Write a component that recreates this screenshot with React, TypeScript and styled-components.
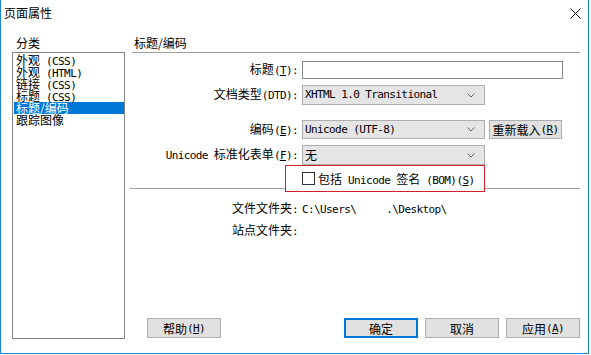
import { FC, ReactNode } from 'react';
import styled, { createGlobalStyle } from 'styled-components';

const GlobalStyle = createGlobalStyle`
  html, body {
    margin: 0;
    padding: 0;
    background: #fff;
  }

  body {
    font-family: 'Noto Sans CJK SC', 'Liberation Sans', sans-serif;
    font-size: 12px;
    color: #000;
  }

  * {
    box-sizing: border-box;
  }
`;

const Window = styled.div`
  display: flex;
  flex-direction: column;
  width: 589px;
  height: 354px;
  border: 1px solid #1883d7;
  border-top: none;
  background: #fff;
`;

const TitleBar = styled.div`
  display: flex;
  align-items: flex-start;
  height: 30px;
  padding: 6px 7px 0 3px;
  line-height: 14px;
`;

const CloseIcon = styled.svg`
  margin-left: auto;
  margin-top: 2px;
`;

const Body = styled.div`
  display: flex;
  flex: 1;
  gap: 5px;
  padding: 0 8px 14px 11px;
`;

const Side = styled.div`
  display: flex;
  flex-direction: column;
  width: 113px;
`;

const SideLabel = styled.div`
  margin-top: 6px;
  padding-left: 4px;
  line-height: 14px;
`;

const CategoryList = styled.ul`
  flex: 1;
  margin: 2px 0 0;
  padding: 1px 0 0 1px;
  list-style: none;
  border: 1px solid #828282;
`;

const CategoryItem = styled.li<{ $active?: boolean }>`
  height: 12px;
  padding-left: 2px;
  line-height: 12px;
  white-space: nowrap;
  background: ${({ $active }) => ($active ? '#0078d7' : 'transparent')};
  color: ${({ $active }) => ($active ? '#fff' : '#000')};
`;

const Main = styled.div`
  display: flex;
  flex-direction: column;
  width: 450px;
`;

const SectionTitle = styled.div`
  margin: 6px 0 0 2px;
  padding: 0 0 2px 2px;
  line-height: 14px;
  border-bottom: 1px solid #a0a0a0;
`;

const Row = styled.div<{ $mt?: number; $h?: number }>`
  display: flex;
  align-items: center;
  margin-top: ${({ $mt }) => $mt ?? 0}px;
  height: ${({ $h }) => $h ?? 14}px;
  line-height: 14px;
`;

const Label = styled.div`
  width: 168px;
  margin-right: 4px;
  text-align: right;
  white-space: nowrap;
`;

const TextInput = styled.div`
  width: 261px;
  height: 100%;
  border: 1px solid #8a8a8a;
  background: #fff;
`;

const Select = styled.div`
  display: flex;
  align-items: center;
  width: 183px;
  height: 100%;
  padding: 0 9px 0 2px;
  border: 1px solid #adadad;
  background: #e5e5e5;
  white-space: nowrap;

  svg {
    margin-left: auto;
  }
`;

const Button = styled.div<{ $w?: number; $default?: boolean }>`
  display: flex;
  align-items: center;
  justify-content: center;
  width: ${({ $w }) => $w ?? 74}px;
  height: 100%;
  border: ${({ $default }) => ($default ? '2px solid #0078d7' : '1px solid #adadad')};
  background: #e1e1e1;
  white-space: nowrap;
`;

const ReloadButton = styled(Button)`
  margin-left: 4px;
`;

const CheckRow = styled.div`
  position: relative;
  z-index: 1;
  display: flex;
  align-items: center;
  gap: 3px;
  width: 200px;
  height: 27px;
  margin-left: 155px;
  padding-left: 16px;
  border: 1px solid #d0202a;
  background: #fff;
  white-space: nowrap;
`;

const CheckBox = styled.span`
  display: inline-block;
  width: 13px;
  height: 13px;
  border: 1px solid #333;
  background: #fff;
`;

const Separator = styled.div`
  height: 1px;
  margin-top: -4px;
  background: #a0a0a0;
`;

const Value = styled.div`
  white-space: pre;
`;

const ButtonBar = styled.div`
  display: flex;
  gap: 7px;
  height: 20px;
  margin-top: auto;
  margin-bottom: 1px;
  padding-left: 17px;
`;

const Spacer = styled.div`
  flex: 1;
`;

const L = styled.span`
  font-family: 'DejaVu Sans Mono', 'Liberation Mono', monospace;
  font-size: 11px;
  letter-spacing: -0.6px;
`;

const Chevron: FC = () => (
  <svg width='8' height='5' viewBox='0 0 8 5'>
    <path d='M0.5 0.5 L4 4 L7.5 0.5' fill='none' stroke='#606060' strokeWidth='1' />
  </svg>
);

const Key: FC<{ children: ReactNode }> = ({ children }) => (
  <L>
    (<u>{children}</u>)
  </L>
);

const categories = ['外观 (CSS)', '外观 (HTML)', '链接 (CSS)', '标题 (CSS)', '标题/编码', '跟踪图像'];

const CategoryText: FC<{ text: string }> = ({ text }) => {
  const parts = text.split(' ');
  if (parts.length === 1) return <>{text}</>;
  return (
    <>
      {parts[0]}
      <L> {parts[1]}</L>
    </>
  );
};

const App: FC = () => {
  return (
    <>
      <GlobalStyle />
      <Window>
        <TitleBar>
          页面属性
          <CloseIcon width='11' height='11' viewBox='0 0 11 11'>
            <path d='M0.5 0.5 L10.5 10.5 M10.5 0.5 L0.5 10.5' stroke='#111' strokeWidth='1' />
          </CloseIcon>
        </TitleBar>
        <Body>
          <Side>
            <SideLabel>分类</SideLabel>
            <CategoryList>
              {categories.map((c, i) => (
                <CategoryItem key={c} $active={i === 4}>
                  <CategoryText text={c} />
                </CategoryItem>
              ))}
            </CategoryList>
          </Side>
          <Main>
            <SectionTitle>标题/编码</SectionTitle>
            <Row $mt={8} $h={18}>
              <Label>
                标题<Key>T</Key>
                <L>:</L>
              </Label>
              <TextInput />
            </Row>
            <Row $mt={6} $h={20}>
              <Label>
                文档类型<L>(DTD):</L>
              </Label>
              <Select>
                <L>XHTML 1.0 Transitional</L>
                <Chevron />
              </Select>
            </Row>
            <Row $mt={15} $h={19}>
              <Label>
                编码<Key>E</Key>
                <L>:</L>
              </Label>
              <Select>
                <L>Unicode (UTF-8)</L>
                <Chevron />
              </Select>
              <ReloadButton $w={73}>
                重新载入<Key>R</Key>
              </ReloadButton>
            </Row>
            <Row $mt={6} $h={20}>
              <Label>
                <L>Unicode </L>标准化表单<Key>F</Key>
                <L>:</L>
              </Label>
              <Select>
                无
                <Chevron />
              </Select>
            </Row>
            <CheckRow>
              <CheckBox />
              <span>
                包括<L> Unicode </L>签名<L> (BOM)</L>
                <Key>S</Key>
              </span>
            </CheckRow>
            <Separator />
            <Row $mt={13}>
              <Label>
                文件文件夹<L>:</L>
              </Label>
              <Value>
                <L>{'C:\\Users\\     .\\Desktop\\'}</L>
              </Value>
            </Row>
            <Row $mt={8}>
              <Label>
                站点文件夹<L>:</L>
              </Label>
            </Row>
            <ButtonBar>
              <Button>
                帮助<Key>H</Key>
              </Button>
              <Spacer />
              <Button $default>确定</Button>
              <Button>取消</Button>
              <Button>
                应用<Key>A</Key>
              </Button>
            </ButtonBar>
          </Main>
        </Body>
      </Window>
    </>
  );
};

export default App;
